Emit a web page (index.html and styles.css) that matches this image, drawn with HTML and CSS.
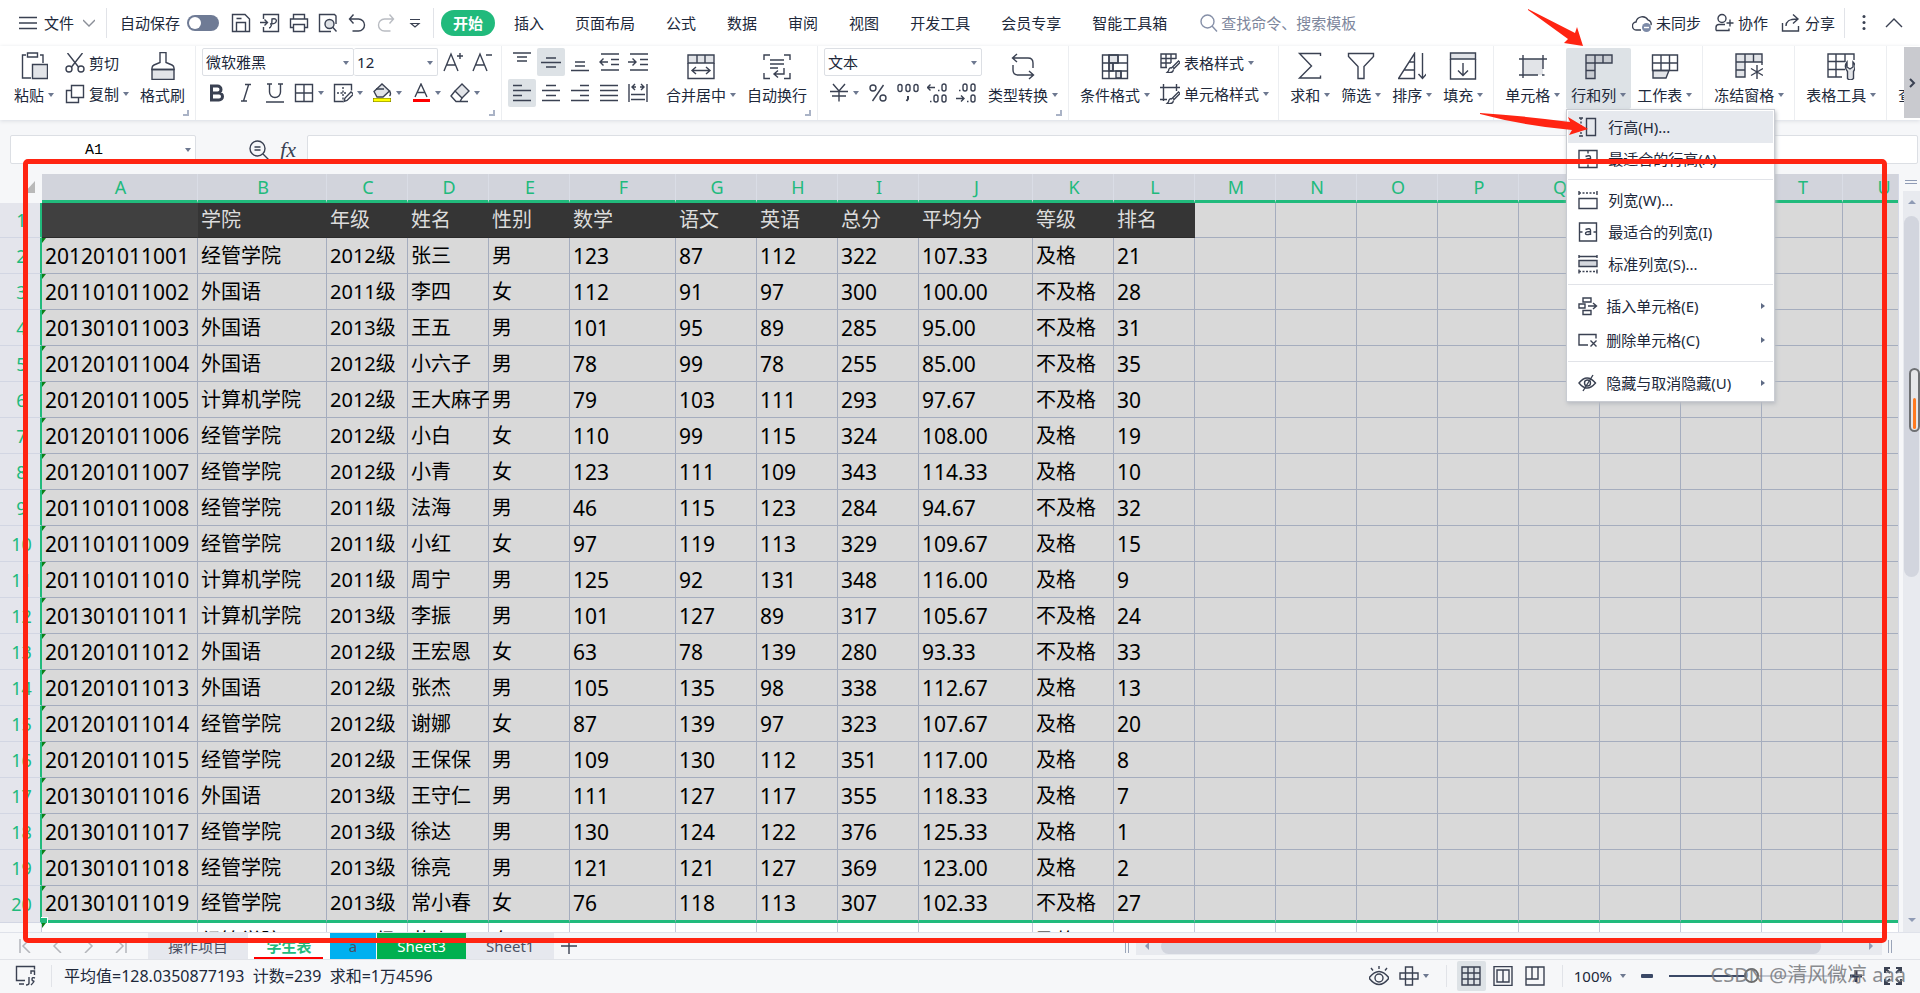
FILE: index.html
```html
<!DOCTYPE html>
<html lang="zh-CN">
<head>
<meta charset="utf-8">
<title>学生表</title>
<link rel="stylesheet" href="styles.css">
</head>
<body>
<div class="app">

<header class="topbar">
  <button class="file"><svg class="i w18" viewBox="0 0 18 18"><path d="M0 3.500h18M0 9h18M0 14.500h18"/></svg><span>文件</span><svg class="i chev" viewBox="0 0 12 12"><path d="M0 3l6 6 6-6"/></svg></button>
  <span class="vsep"></span>
  <label class="autosave"><span>自动保存</span><input type="checkbox" class="toggle"></label>
  <div class="quick">
    <button aria-label="保存"><svg class="i" viewBox="0 0 20 20"><path d="M1.500 1.500h12.500l4.500 4.500v12.500h-17zM5.500 18.500v-9h9v9M5.500 5.500h5"/></svg></button>
    <button aria-label="输出为PDF"><svg class="i" viewBox="0 0 20 20"><path d="M3.500 6v-4.500h15v17h-15v-4.500M0 9.500h7M4.500 6.500l3 3-3 3M9 15c2 0 3-2 3-9 4-1 5 1 4 3s-4 2-6 2"/></svg></button>
    <button aria-label="打印"><svg class="i" viewBox="0 0 20 20"><path d="M4.500 6v-4.500h11v4.500M4.500 14.500h-3v-8.500h17v8.500h-3M4.500 11.500h11v7h-11z"/></svg></button>
    <button aria-label="打印预览"><svg class="i" viewBox="0 0 20 20"><path d="M13 18.500h-11.500v-17h15l1.500 1.500v8"/><circle cx="11.500" cy="11" r="4.500" fill="#dfe2e6"/><path d="M14.500 14l4 4.500"/></svg></button>
    <button aria-label="撤销"><svg class="i" viewBox="0 0 20 20"><path d="M6.500 1.500l-4 4.500 4 4.500M2.500 6h9a6 6 0 0 1 0 12h-6"/></svg></button>
    <button aria-label="恢复"><svg class="i pale" viewBox="0 0 20 20"><path d="M13.500 1.500l4 4.500-4 4.500M17.500 6h-9a6 6 0 0 0 0 12h6"/></svg></button>
    <button aria-label="更多"><svg class="i thin" viewBox="0 0 20 20"><path d="M5 6.500h10M6 10.500l4 3.500 4-3.500z"/></svg></button>
  </div>
  <span class="vsep s2"></span>
  <nav class="tabs">
    <button class="active">开始</button><button>插入</button><button>页面布局</button><button>公式</button><button>数据</button><button>审阅</button><button>视图</button><button>开发工具</button><button>会员专享</button><button>智能工具箱</button>
  </nav>
  <label class="search"><svg class="i w18 mute" viewBox="0 0 18 18"><circle cx="7.500" cy="7.500" r="6.500"/><path d="M12 12l5 5.500"/></svg><input type="search" aria-label="搜索" placeholder="查找命令、搜索模板"></label>
  <div class="account">
    <button><svg class="i" viewBox="0 0 20 20"><path d="M9 17H5a4 4 0 0 1-1-8 6.500 6.500 0 0 1 12-2 4 4 0 0 1 3 5"/><circle cx="14.500" cy="14.500" r="4.500" fill="#7d8ba8" stroke="none"/><path d="M12 14.500h5" stroke="#fff"/></svg>未同步</button>
    <button><svg class="i" viewBox="0 0 20 20"><circle cx="8" cy="5.500" r="4"/><path d="M2 17.500v-3c0-2 1-3 3-3h6M2 17.500h13v-2M12.500 10h7M16 6.500v7"/></svg>协作</button>
    <button><svg class="i" viewBox="0 0 20 20"><path d="M1.500 10v8h16v-5M5 13c0-5 3-7 11-7M12 1.500l5 4.500-5 4.500"/></svg>分享</button>
  </div>
  <span class="vsep s3"></span>
  <button class="dots" aria-label="更多选项"><svg viewBox="0 0 4 18"><g fill="#3a4152"><circle cx="2" cy="2.500" r="1.500"/><circle cx="2" cy="8.500" r="1.500"/><circle cx="2" cy="14.500" r="1.500"/></g></svg></button>
  <button class="fold" aria-label="折叠功能区"><svg class="i w18" viewBox="0 0 18 18"><path d="M1 13l8-8 8 8"/></svg></button>
</header>

<section class="ribbon">
  <div class="group first">
    <button class="big"><svg class="i b" viewBox="0 0 28 28"><path d="M6 3H2.500v23H11M20 3h3v8M7.500 1h10v4h-10z"/><path d="M12.500 12.500h15v14h-15z" fill="#e2e4e8"/></svg><span class="lab">粘贴<i class="caret"></i></span></button>
    <div class="col">
      <button class="small"><svg class="i" viewBox="0 0 20 20"><path d="M2.500 0l11 14M17.500 0l-11 14"/><circle cx="4" cy="16" r="3"/><circle cx="16" cy="16" r="3"/></svg>剪切</button>
      <button class="small"><svg class="i" viewBox="0 0 20 20"><path d="M6.500 1.500h12v12h-12zM6.500 6.500h-5v12h12v-5"/></svg>复制<i class="caret"></i></button>
    </div>
    <button class="big"><svg class="i b" viewBox="0 0 28 28"><path d="M3 17.500h22v10h-22z" fill="#e2e4e8"/><path d="M11 10.500v-10h6v10l6 2.500q2 1 2 3v1.500h-22v-1.500q0-2 2-3z"/></svg><span class="lab">格式刷</span></button>
    <i class="launch"></i>
  </div>

  <div class="group">
    <div class="col font">
      <div class="line">
        <span class="sel name"><select aria-label="字体"><option>微软雅黑</option></select></span><span class="sel size"><select aria-label="字号"><option>12</option></select></span>
        <button class="ic" aria-label="增大字号"><svg class="i" viewBox="0 0 20 20"><path d="M1 19l7-17 7 17M3.500 13h9M14 4h6M17 1v6"/></svg></button>
        <button class="ic" aria-label="减小字号"><svg class="i" viewBox="0 0 20 20"><path d="M1 19l7-17 7 17M3.500 13h9M14 3h6"/></svg></button>
      </div>
      <div class="line">
        <button class="ic" aria-label="加粗"><svg class="i" viewBox="0 0 20 20"><path stroke-width="3" d="M4.500 3h6a3.500 3.500 0 0 1 0 7h-6zM4.500 10h7.500a3.500 3.500 0 0 1 0 7h-7.500z"/></svg></button>
        <button class="ic" aria-label="倾斜"><svg class="i" viewBox="0 0 20 20"><path d="M9 1.500h6M5 18h6M12.500 2l-5 16"/></svg></button>
        <button class="ic" aria-label="下划线"><svg class="i" viewBox="0 0 20 20"><path d="M2 1h5M13 1h5M4.500 1v8a5.500 5.500 0 0 0 11 0v-8M1 19h18"/></svg></button>
        <button class="ic dd" aria-label="边框"><svg class="i" viewBox="0 0 20 20"><path d="M1.500 1.500h17v17h-17zM10 1.500v17M1.500 10h17"/></svg><i class="caret"></i></button>
        <button class="ic dd" aria-label="绘图边框"><svg class="i" viewBox="0 0 20 20"><path d="M10 18.500h-8.500v-17h17v6"/><path stroke-dasharray="2 1.500" d="M10 4v13M4 10h10"/><path d="M11 18.500l1-3.500 6-6 2.500 2-6.500 6.500z"/></svg><i class="caret"></i></button>
        <button class="ic dd" aria-label="填充颜色"><svg class="i" viewBox="0 0 20 20"><path fill="#e2e4e8" d="M2 8.500l8-7.500 7.500 7-6.500 6h-6z"/><path d="M4 6h8M17.500 8q2 3 0 5"/><path d="M1 17h18" stroke="#6b6b00" stroke-width="4"/><path d="M1.500 17h17" stroke="#ff0" stroke-width="3"/></svg><i class="caret"></i></button>
        <button class="ic dd" aria-label="字体颜色"><svg class="i" viewBox="0 0 20 20"><path d="M4 14l6-13 6 13M6 9.500h8"/><path d="M2 17.500h17" stroke="red" stroke-width="3"/></svg><i class="caret"></i></button>
        <button class="ic dd" aria-label="清除"><svg class="i" viewBox="0 0 20 20"><path fill="#e2e4e8" d="M5 8l7-7 7 7-7 7z"/><path d="M5 8l-4 5 5 5.500h4l2-3.500M8 18.500h10"/></svg><i class="caret"></i></button>
      </div>
    </div>
    <i class="launch"></i>
  </div>

  <div class="group align">
    <div class="col">
      <div class="line gap">
        <button class="ic" aria-label="顶端对齐"><svg class="i" viewBox="0 0 20 20"><path d="M1 1h18M5 5h10M5 9h10"/></svg></button>
        <button class="ic on" aria-label="垂直居中"><svg class="i" viewBox="0 0 20 20"><path d="M5 6h10M0 10.500h20M5 15h10"/></svg></button>
        <button class="ic" aria-label="底端对齐"><svg class="i" viewBox="0 0 20 20"><path d="M5 10h10M5 14h10M1 18.500h18"/></svg></button>
        <button class="ic" aria-label="减少缩进"><svg class="i" viewBox="0 0 20 20"><path d="M2 2h18M12 7.500h8M12 12.500h8M2 18h18M1 10h8M4.500 6.500l-3.500 3.500 3.500 3.500"/></svg></button>
        <button class="ic" aria-label="增加缩进"><svg class="i" viewBox="0 0 20 20"><path d="M2 2h18M12 7.500h8M12 12.500h8M2 18h18M0 10h8M4.500 6.500l3.500 3.500-3.500 3.500"/></svg></button>
      </div>
      <div class="line gap">
        <button class="ic on" aria-label="左对齐"><svg class="i" viewBox="0 0 20 20"><path d="M1 2.500h9M1 7.500h18M1 12.500h9M1 17.500h18"/></svg></button>
        <button class="ic" aria-label="水平居中"><svg class="i" viewBox="0 0 20 20"><path d="M5 2.500h10M1 7.500h18M5 12.500h10M1 17.500h18"/></svg></button>
        <button class="ic" aria-label="右对齐"><svg class="i" viewBox="0 0 20 20"><path d="M10 2.500h9M1 7.500h18M10 12.500h9M1 17.500h18"/></svg></button>
        <button class="ic" aria-label="两端对齐"><svg class="i" viewBox="0 0 20 20"><path d="M1 2.500h18M1 7.500h18M1 12.500h18M1 17.500h18"/></svg></button>
        <button class="ic" aria-label="分散对齐"><svg class="i" viewBox="0 0 20 20"><path d="M1 1v18M19 1v18M3 11.500h14M3 16.500h14M4 4h4M12 4h4M7 1l-3 3 3 3M13 1l3 3-3 3"/></svg></button>
      </div>
    </div>
    <button class="big merge"><svg class="i b" viewBox="0 0 28 28"><path fill="#e2e4e8" d="M1 3h26v8h-26z"/><path d="M1 11v15.500h26v-15.500M10 3v8M18 3v8M5 18.500h18M9 15l-4 3.500 4 3.500M19 15l4 3.500-4 3.500"/></svg><span class="lab">合并居中<i class="caret"></i></span></button>
    <button class="big"><svg class="i b" viewBox="0 0 28 28"><path d="M1 8v-5h6M21 3h6v5M1 21v5.500h6M21 26.500h6v-5.500M7 8h14M7 12h14M7 16h8M21 16v6h-9M15 18.500l-4 3.500 4 3.500"/></svg><span class="lab">自动换行</span></button>
    <i class="launch"></i>
  </div>

  <div class="group">
    <div class="col">
      <div class="line"><span class="sel num"><select aria-label="数字格式"><option>文本</option></select></span></div>
      <div class="line nums">
        <button class="ic dd" aria-label="货币"><svg class="i" viewBox="0 0 20 20"><path d="M4 1l6 7 6-7M1 8.500h18M3 13h14M10 8.500v10"/></svg><i class="caret"></i></button>
        <button class="ic" aria-label="百分比"><svg class="i" viewBox="0 0 20 20"><circle cx="5" cy="5" r="3"/><circle cx="15" cy="15" r="3"/><path d="M15.500 2l-11 16"/></svg></button>
        <button class="ic" aria-label="千位分隔"><svg class="i w22" viewBox="0 0 22 20"><rect x="1" y="1.500" width="4" height="7" rx="2"/><rect x="9" y="1.500" width="4" height="7" rx="2"/><rect x="17" y="1.500" width="4" height="7" rx="2"/><path stroke-width="2" d="M11 13v3l-1.500 2"/></svg></button>
        <button class="ic" aria-label="增加小数位"><svg class="i" viewBox="0 0 20 20"><path d="M0 4.500h8M3.500 1.500l-3 3 3 3M11 7.500h1.500M3 18.500h1.500"/><rect x="15" y="1" width="4" height="7" rx="2"/><rect x="7" y="12" width="4" height="7" rx="2"/><rect x="15" y="12" width="4" height="7" rx="2"/></svg></button>
        <button class="ic" aria-label="减少小数位"><svg class="i" viewBox="0 0 20 20"><path d="M0 15.500h8M5 12.500l3 3-3 3M11 18.500h1.500M3 7.500h1.500"/><rect x="7" y="1" width="4" height="7" rx="2"/><rect x="15" y="1" width="4" height="7" rx="2"/><rect x="15" y="12" width="4" height="7" rx="2"/></svg></button>
      </div>
    </div>
    <button class="big"><svg class="i b" viewBox="0 0 28 28"><path d="M8 2L3.500 6 8 10M4 6h15q5 0 5 5v5M4 13v5q0 5 5 5h15M20 19l4.500 4-4.500 4"/></svg><span class="lab">类型转换<i class="caret"></i></span></button>
    <i class="launch"></i>
  </div>

  <div class="group">
    <button class="big"><svg class="i b" viewBox="0 0 28 28"><path fill="#e2e4e8" d="M8 3h9v8h-9zM15 19h5v7h-5zM8 11h4v8h-4z"/><path d="M1.500 3h25v23.500h-25zM1.500 11h25M1.500 19h25M8 3v23M17 3v8M12 11v8M20 19v7"/></svg><span class="lab">条件格式<i class="caret"></i></span></button>
    <div class="col">
      <button class="small"><svg class="i" viewBox="0 0 20 20"><path d="M7 14.500h-6v-13.500h15v5M1 5.500h15M1 10h10M6 1v13.500M11 1v9M18.500 8l-6 6 1.500 1.500 6-6zM12 15q-3-1-3.500 3l-1.500 1.500q6 1 6.500-3"/></svg>表格样式<i class="caret"></i></button>
      <button class="small"><svg class="i" viewBox="0 0 20 20"><path d="M0 3.500h20M3.500 0v17M0 15.500h7M16.500 0v7M18.500 8l-6 6 1.500 1.500 6-6zM12 15q-3-1-3.500 3l-1.500 1.500q6 1 6.500-3"/></svg>单元格样式<i class="caret"></i></button>
    </div>
  </div>

  <div class="group">
    <button class="big"><svg class="i b" viewBox="0 0 28 28"><path d="M24.500 4v-2.500h-21l12 12.500-12 12h21v-2.500"/></svg><span class="lab">求和<i class="caret"></i></span></button>
    <button class="big"><svg class="i b" viewBox="0 0 28 28"><path d="M1.500 1.500h25v3l-9.500 10v12h-6v-12l-9.500-10z"/></svg><span class="lab">筛选<i class="caret"></i></span></button>
    <button class="big"><svg class="i b" viewBox="0 0 28 28"><path d="M16.500 1.500v25h-16zM16.500 10h-5M16.500 18h-10M24.500 1v25M20.500 22l4 4.500 4-4.500"/></svg><span class="lab">排序<i class="caret"></i></span></button>
    <button class="big"><svg class="i b" viewBox="0 0 28 28"><path fill="#e2e4e8" d="M1.500 1h25v6h-25z"/><path d="M1.500 7v20h25v-20M14 11v12M9 18.500l5 5 5-5"/></svg><span class="lab">填充<i class="caret"></i></span></button>
  </div>

  <div class="group">
    <button class="big"><svg class="i b" viewBox="0 0 28 28"><path fill="#e2e4e8" stroke="none" d="M4 7h20v16h-20z"/><path d="M0 7h28M4 3v23M24 3v14M0 23h19M23 23h2.500"/></svg><span class="lab">单元格<i class="caret"></i></span></button>
    <div class="drop">
      <button class="big on"><svg class="i b" viewBox="0 0 28 28"><path fill="#c8ccd2" d="M1 3h26v8h-17v15.500h-9z"/><path d="M1 11h9v-8M18 3v8M1 18.500h9"/></svg><span class="lab">行和列<i class="caret"></i></span></button>
      <div class="menu">
        <button class="hot"><svg class="i" viewBox="0 0 20 20"><path d="M8.500 1.500h9v17h-9zM1 1h4M1 19h4"/><path stroke-dasharray="2 1.500" d="M3 1v18"/></svg>行高(H)...</button>
        <button><svg class="i" viewBox="0 0 20 20"><path d="M1 1.500h18v17h-18zM10 1.500v3M10 15.500v3M7.500 7.500q5-2 5 1v4.500M12.500 9.500q-5 0-5 2t5 .5"/></svg>最适合的行高(A)</button>
        <hr>
        <button><svg class="i" viewBox="0 0 20 20"><path d="M1 8.500h18v10h-18zM1 1v4M19 1v4"/><path stroke-dasharray="2 1.500" d="M1 3h18"/></svg>列宽(W)...</button>
        <button><svg class="i" viewBox="0 0 20 20"><path d="M1.500 1h17v18h-17zM1.500 10h3M15.500 10h3M7.500 7.500q5-2 5 1v4.500M12.500 9.500q-5 0-5 2t5 .5"/></svg>最适合的列宽(I)</button>
        <button><svg class="i" viewBox="0 0 20 20"><path d="M1 1v3M19 1v3M1 2.500h18M1 15.500v4M19 15.500v4"/><path fill="#d5d8de" d="M1 6.500h18v6h-18z"/><path stroke-dasharray="2 1.500" d="M1 17.500h18"/></svg>标准列宽(S)...</button>
        <hr>
        <button class="tall"><svg class="i" viewBox="0 0 20 20"><path d="M5 2h8v4h-8zM1 8h6v4h-6zM5 14.500h8v4h-8zM10 10h8M15 7l3.500 3-3.500 3"/></svg>插入单元格(E)<i class="more"></i></button>
        <button class="tall"><svg class="i" viewBox="0 0 20 20"><path d="M10 15h-9v-10.500h17v4M12.500 10.500l6 6M18.500 10.500l-6 6"/></svg>删除单元格(C)<i class="more"></i></button>
        <hr>
        <button class="tall"><svg class="i" viewBox="0 0 20 20"><path d="M1 10q8-10 16.500 0-8.500 10-16.500 0zM15 2l-10 16"/><circle cx="9.500" cy="10" r="3"/></svg>隐藏与取消隐藏(U)<i class="more"></i></button>
      </div>
    </div>
    <button class="big"><svg class="i b" viewBox="0 0 28 28"><path fill="#e2e4e8" d="M2 18.500v7.500h13l3-7.500z"/><path d="M1.500 3h25v15.500h-25zM1.500 11h25M10 3v15.500M18.500 3v15.500"/></svg><span class="lab">工作表<i class="caret"></i></span></button>
  </div>

  <div class="group">
    <button class="big"><svg class="i b" viewBox="0 0 28 28"><path fill="#e2e4e8" d="M1 2h26v8h-17v15h-9z"/><path d="M1 10h9v-8M18.500 2v8M1 18h9M27 10v3M22 13v14M16 16.500l12 7M28 16.500l-12 7"/></svg><span class="lab">冻结窗格<i class="caret"></i></span></button>
  </div>
  <div class="group">
    <button class="big"><svg class="i b" viewBox="0 0 28 28"><path d="M15 25h-14v-23h26v6M1 9.500h17M1 17.500h17M9 2v23M18 2v8"/><path fill="#e2e4e8" d="M20 10v5l3 2 3-2v-5q4 4 .5 9.500v7q-3.500 3-6 0v-7q-4-5-.5-9.500z"/></svg><span class="lab">表格工具<i class="caret"></i></span></button>
  </div>
  <div class="group cut"><button class="big"><span class="lab">查找</span></button></div>
  <button class="slide" aria-label="向右滚动"><svg class="i chev" viewBox="0 0 12 12"><path stroke-width="2" d="M4 2l4 4-4 4"/></svg></button>
</section>

<section class="formula">
  <label class="cellname"><input aria-label="名称框" value="A1"><i class="caret"></i></label>
  <button class="fic" aria-label="浏览公式结果"><svg class="i" viewBox="0 0 20 20"><circle cx="8.500" cy="8.500" r="7.500"/><path d="M14 14l6 6M5.500 7h6M5.500 10h6"/></svg></button>
  <button class="fx">fx</button>
  <input class="fbar" aria-label="编辑栏">
</section>

<main class="work">
  <div class="sheet"><table id="grid" class="grid"></table></div>
  <aside class="rail">
    <span class="split"></span>
    <div class="track"><i class="up"></i><span class="thumb"></span><i class="down"></i></div>
  </aside>
</main>

<nav class="sheets">
  <div class="jump">
    <button aria-label="第一张"><svg viewBox="0 0 12 14"><path d="M1 0v14M11 0L4 7l7 7"/></svg></button>
    <button aria-label="上一张"><svg viewBox="0 0 12 14"><path d="M10 0L3 7l7 7"/></svg></button>
    <button aria-label="下一张"><svg viewBox="0 0 12 14"><path d="M2 0l7 7-7 7"/></svg></button>
    <button aria-label="最后一张"><svg viewBox="0 0 12 14"><path d="M11 0v14M1 0l7 7-7 7"/></svg></button>
  </div>
  <button class="st">操作项目</button><button class="st cur">学生表</button><button class="st blue">a</button><button class="st green">Sheet3</button><button class="st">Sheet1</button>
  <button class="add" aria-label="新建工作表"><svg class="i w18" viewBox="0 0 18 18"><path d="M1 9h16M9 1v16"/></svg></button>
  <div class="hscroll"><span class="grip"></span><div class="htrack"><i class="lt"></i><span class="hthumb"></span><i class="rt"></i></div><span class="grip"></span></div>
</nav>

<footer class="status">
  <svg class="i js" viewBox="0 0 22 24"><path d="M10 16.500h-8.500v-14h18v3M4 20h5M16 10v-3h3.500v4M14 13v6q0 2-3 2M20 14q-3-1-3 1t1.500 2-2.500 4"/></svg>
  <span class="vsep"></span>
  <output class="stats">平均值=128.0350877193&nbsp; 计数=239&nbsp; 求和=1万4596</output>
  <div class="views">
    <button class="v" aria-label="护眼模式"><svg class="i" viewBox="0 0 20 20"><path d="M0 12q10-13 20 0-10 13-20 0zM10 0v3M2 2l2 2.500M18 2l-2 2.500"/><circle cx="10" cy="12" r="4"/></svg></button>
    <button class="v cross" aria-label="阅读模式"><svg class="i" viewBox="0 0 20 20"><path d="M6.500 1h7v18h-7zM1 7h18v6h-18z"/></svg><i class="caret"></i></button>
    <span class="vsep"></span>
    <button class="v on" aria-label="普通视图"><svg class="i" viewBox="0 0 20 20"><path d="M1 1h18v18h-18zM1 7h18M1 13h18M7 1v18M13 1v18"/></svg></button>
    <button class="v" aria-label="页面布局"><svg class="i" viewBox="0 0 20 20"><path d="M1 .5h18v19h-18zM4 4h12v12h-12zM10 4v12"/></svg></button>
    <button class="v last" aria-label="分页预览"><svg class="i" viewBox="0 0 20 20"><path d="M1 1h18v18h-18zM1 13h12v-12M7 1v12"/></svg></button>
    <span class="vsep"></span>
    <button class="zoom">100%<i class="caret"></i></button>
    <button class="minus" aria-label="缩小"></button>
    <input type="range" class="slider" aria-label="缩放" min="0" max="200" value="93">
    <button class="plus" aria-label="放大"><svg class="i" viewBox="0 0 12 12"><path stroke-width="3" d="M0 6h12M6 0v12"/></svg></button>
    <button class="full" aria-label="全屏"><svg class="i" viewBox="0 0 20 20"><path stroke-width="2" d="M2 7v-5h5M13 2h5v5M2 13v5h5M13 18h5v-5M3 3l4 4M17 3l-4 4M3 17l4-4M17 17l-4-4"/></svg></button>
  </div>
</footer>

<span class="floater"><i></i></span>
<div class="frame"></div>
<svg class="arrows" width="150" height="130" viewBox="0 0 150 130"><g fill="#ff2412"><path d="M48 0L95 24l2-6 6 19-19-3 4-4L48 1z"/><path d="M0 104q45 3 90 9l-2-5 20 12-19 6 3-5Q45 117 0 105z"/></g></svg>
<span class="mark">CSDN @清风微凉 aaa</span>
</div>
<script src="grid.js"></script>
</body>
</html>
```
FILE: styles.css
```css
* { box-sizing: border-box; }
body { margin: 0; background: #f6f7f9; color: #20283a; font: 15px/20px "Noto Sans", "Noto Sans CJK SC", sans-serif; overflow: hidden; }
button, input, select { font: inherit; color: inherit; background: none; border: 0; padding: 0; margin: 0; outline: 0; }
button { display: flex; align-items: center; justify-content: center; white-space: nowrap; flex: none; }
.app { position: relative; height: 100vh; display: flex; flex-direction: column; overflow: hidden; }
.i { width: 20px; height: 20px; fill: none; stroke: #3a4152; stroke-width: 1.4; flex: none; display: block; }
.i.w18 { width: 18px; height: 18px; }
.i.w22 { width: 22px; }
.i.b { width: 28px; height: 28px; }
.i.chev { width: 12px; height: 12px; }
.i.pale { stroke: #b9bcc2; }
.i.mute { stroke: #8690a8; }
.i.thin { stroke-width: 1.2; }
.vsep { width: 1px; height: 30px; background: #e1e3e8; flex: none; }
.caret { width: 0; height: 0; border: 3px solid transparent; border-top: 4px solid #6d7890; border-bottom: 0; flex: none; }

.topbar { height: 46px; flex: none; background: #fff; display: flex; align-items: center; padding: 0 17px 0 19px; }
.file { gap: 7px; }
.file .chev { margin-left: 2px; stroke: #8b8f98; }
.topbar > .vsep { margin-left: 11px; }
.autosave { display: flex; align-items: center; gap: 7px; margin-left: 13px; flex: none; }
.toggle { appearance: none; width: 32px; height: 16px; border-radius: 8px; background: #6f7b95; display: flex; align-items: center; padding: 0 2px; }
.toggle::before { content: ""; width: 12px; height: 12px; border-radius: 50%; background: #fff; }
.quick { display: flex; margin-left: 7px; }
.quick button { width: 29px; }
.topbar > .s2 { margin-left: 4px; }
.tabs { display: flex; gap: 31px; margin-left: 7px; }
.tabs .active { width: 54px; height: 26px; border-radius: 13px; background: #21ba7c; color: #fff; font-weight: 700; margin-right: -12px; }
.search { display: flex; align-items: center; gap: 3px; margin-left: 33px; flex: 1; min-width: 0; }
.search input { flex: 1; min-width: 0; appearance: none; }
.search input::placeholder { color: #7d869c; opacity: 1; }
.account { display: flex; gap: 13px; }
.account button { gap: 4px; }
.topbar > .s3 { margin-left: 9px; }
.dots { margin-left: 17px; }
.dots svg { width: 4px; height: 18px; }
.fold { margin-left: 19px; }

.ribbon { height: 74px; flex: none; background: #fff; display: flex; position: relative; z-index: 2; box-shadow: 0 1px 4px #d9dce2; }
.group { position: relative; display: flex; gap: 1px; align-items: flex-start; padding: 2px 5px 0 6px; border-left: 1px solid #eceef1; flex: none; }
.group.first { border-left: 0; padding-left: 9px; gap: 2px; }
.group.cut { flex: 1; min-width: 0; overflow: hidden; }
.cut .big { padding-top: 33px; }
.launch { position: absolute; right: 6px; bottom: 4px; width: 6px; height: 6px; border: solid #aab3c6; border-width: 0 2px 2px 0; }
.big { height: 61px; padding: 0 5px; flex-direction: column; gap: 5px; border-radius: 2px; }
.lab { display: flex; align-items: center; gap: 4px; }
.on { background: #dde2e6; }
.col { display: flex; flex-direction: column; gap: 2px; }
.small { height: 29px; padding: 0 4px; gap: 4px; justify-content: flex-start; }
.line { display: flex; height: 28px; align-items: center; }
.line + .line { margin-top: 1px; }
.line.gap { gap: 1px; }
.ic { width: 28px; height: 28px; border-radius: 2px; }
.font .ic { width: 29px; }
.ic.dd, .font .ic.dd { width: 39px; gap: 4px; }
.merge { margin-left: 8px; }
.nums { justify-content: space-between; padding-right: 2px; }
.sel { position: relative; display: block; height: 28px; border: 1px solid #dcdfe4; border-radius: 2px; }
.sel select { appearance: none; width: 100%; height: 26px; padding: 0 3px; display: block; }
.sel::after { content: ""; position: absolute; right: 4px; top: 12px; border: 3px solid transparent; border-top: 4px solid #6d7890; border-bottom: 0; }
.sel.name { width: 152px; }
.sel.size { width: 84px; border-left: 0; }
.sel.num { width: 158px; }
.slide { width: 16px; height: 71px; margin-top: 1px; background: #c9cacf; }

.drop { position: relative; }
.menu { position: absolute; z-index: 3; left: 0; top: 61px; width: 209px; padding: 1px; background: #fff; border: 1px solid #c9ccd2; box-shadow: 1px 2px 4px #b9bcc2; }
.menu button { width: 100%; height: 32px; padding: 0 8px 0 10px; gap: 10px; justify-content: flex-start; }
.menu .tall { height: 34px; gap: 8px; }
.menu .hot { background: #e6e9ee; }
.menu hr { margin: 4px 0; border: 0; height: 1px; background: #e1e3e8; }
.more { margin-left: auto; border: 3px solid transparent; border-left: 4px solid #5f6b85; border-right: 0; }

.formula { height: 54px; flex: none; display: flex; align-items: center; padding: 15px 2px 10px 10px; }
.cellname { display: flex; align-items: center; width: 186px; height: 29px; border: 1px solid #dcdfe4; border-radius: 2px; background: #fff; padding-right: 4px; }
.cellname input { flex: 1; min-width: 0; text-align: center; padding: 2px 8px 0 0; font: 15px/20px "Liberation Mono", monospace; color: #000; }
.fic { margin-left: 53px; }
.fx { width: 38px; font: italic 22px/24px "Liberation Serif", serif; color: #3a4152; }
.fbar { flex: 1; height: 29px; border: 1px solid #dcdfe4; border-radius: 2px; background: #fff; }

.work { flex: 1; min-height: 0; display: flex; gap: 4px; }
.sheet { flex: 1; min-width: 0; overflow: hidden; background: #fff; border-right: 1px solid #d5d9e6; }
.grid { table-layout: fixed; width: 0; border-collapse: separate; border-spacing: 0; color: #000; }
.c-row { width: 42px; } .c-id { width: 156px; } .c-dept { width: 129px; } .c-std { width: 81px; } .c-f { width: 106px; } .c-avg { width: 114px; }
.grid th, .grid td { padding: 0; font-weight: 400; white-space: nowrap; }
.grid thead th { height: 29px; background: #d2d4dc; color: #21ba7c; font-size: 18px; line-height: 24px; border-right: 1px solid #dadde6; border-bottom: 3px solid #21ba7c; padding-left: 2px; }
.grid thead .corner { background: #f6f7f9; border-right: 0; border-bottom-color: #f6f7f9; padding: 0; }
.corner::before { content: ""; display: block; margin-left: 24px; width: 0; border-left: 11px solid transparent; border-bottom: 12px solid #b9b9b9; }
.grid tbody th { background: #e4e5ec; color: #21ba7c; font-size: 18px; line-height: 24px; border-right: 2px solid #21ba7c; border-bottom: 1px solid #d2d6e3; padding-left: 3px; }
.grid td { position: relative; height: 36px; padding-left: 3px; background: #d9d9d9; border-right: 1px solid #a5adbe; border-bottom: 1px solid #a5adbe; font-size: 21px; line-height: 24px; }
.grid td.t { font-size: 20px; }
.grid .head td { height: 35px; }
.grid .head td.dark { background: #353535; color: #dcdcdc; border-color: #2b2b2b; border-right-color: #353535; }
.grid .head td.dark:nth-child(2) { background: #404040; border-right-color: #404040; }
.grid td.id::before { content: ""; position: absolute; left: 0; top: 0; border-top: 5px solid #0d7f17; border-right: 4px solid transparent; }
.grid .last td { height: 37px; border-bottom: 3px solid #21ba7c; }
.grid .last td.id::after { content: ""; position: absolute; left: -1px; bottom: -4px; width: 6px; height: 6px; background: #21ba7c; border: solid #fff; border-width: 1px 1px 0 0; }
.grid .after td { background: #fff; border-color: #c5cadb; }
.grid .after th { background: #f6f7f9; border-right: 1px solid #c5cadb; }
.rail { width: 17px; display: flex; flex-direction: column; }
.split { height: 4px; margin: 6px 3px 7px 2px; border: solid #8f9bb5; border-width: 1px 0; }
.track { flex: 1; min-height: 0; background: #e8eaef; display: flex; flex-direction: column; align-items: center; padding: 9px 0 10px; }
.up { border: 4px solid transparent; border-bottom-color: #8f9bb5; border-top: 0; }
.down { margin-top: auto; border: 4px solid transparent; border-top-color: #8f9bb5; border-bottom: 0; }
.thumb { width: 15px; flex: 0 0 50%; margin-top: 12px; border-radius: 8px; background: #d2d5de; }

.sheets { height: 27px; flex: none; display: flex; border-top: 1px solid #dfe2ea; padding-left: 19px; }
.jump { width: 129px; flex: none; display: flex; gap: 20px; }
.jump svg { width: 12px; height: 14px; fill: none; stroke: #b3b5ba; stroke-width: 1.5; display: block; }
.st { padding: 0 20px; background: #e6e8ee; color: #4a5064; }
.st.cur { width: 82px; background: #fff; color: #21ba7c; font-weight: 700; padding: 0; position: relative; }
.st.cur::after { content: ""; position: absolute; left: 6px; right: 7px; bottom: 0; height: 2px; background: red; }
.st.blue { width: 46px; background: #00b0f0; }
.st.green { width: 89px; margin-left: 1px; background: #00b050; color: #fff; }
.add { padding: 0 6px; }
.hscroll { width: 795px; margin-left: auto; display: flex; align-items: center; }
.grip { width: 4px; height: 13px; border: solid #9aa4b8; border-width: 0 1px; }
.htrack { flex: 1; margin: 0 6px 0 7px; height: 17px; background: #e8eaef; display: flex; align-items: center; padding: 0 9px; }
.hthumb { height: 15px; flex: 0 1 660px; margin: 0 auto 0 12px; border-radius: 8px; background: #d2d5de; }
.lt { border: 4px solid transparent; border-right-color: #8f9bb5; border-left: 0; }
.rt { border: 4px solid transparent; border-left-color: #8f9bb5; border-right: 0; }
.hscroll > .grip:last-child { margin-right: 28px; }

.status { height: 34px; flex: none; display: flex; align-items: center; border-top: 1px solid #e1e3e8; padding: 0 17px 2px 15px; }
.js { width: 22px; height: 24px; }
.status > .vsep { height: 22px; margin: 0 12px 0 14px; }
.stats { white-space: pre; font-size: 16px; }
.views { display: flex; align-items: center; margin-left: auto; }
.views .vsep { height: 22px; }
.v { width: 29px; height: 30px; margin-right: 3px; border-radius: 2px; }
.v.cross { width: 34px; gap: 4px; margin-right: 15px; }
.v.on { margin-left: 10px; }
.v.last { margin-right: 12px; }
.zoom { gap: 8px; margin-left: 11px; }
.minus { width: 12px; height: 4px; border-radius: 1px; background: #3a4866; margin: 0 16px 0 15px; }
.slider { appearance: none; width: 176px; height: 16px; background: linear-gradient(90deg, #3a4866 46%, #c3c8d2 46%) center / 100% 2px no-repeat; }
.slider::-webkit-slider-thumb { appearance: none; width: 15px; height: 15px; border-radius: 50%; border: 2px solid #6b6b6b; background: #f6f7f9; }
.plus { margin: 0 21px 0 5px; }
.plus .i { width: 12px; height: 12px; stroke: #2f3a55; }

.floater { position: absolute; z-index: 4; right: 0; top: 368px; width: 11px; height: 64px; border: 2px solid #6e7073; border-radius: 6px; background: #e6e7ea; padding: 28px 2px 1px; display: flex; }
.floater i { flex: 1; background: #ff7a20; border-radius: 2px; }
.frame { position: absolute; z-index: 5; left: 23px; right: 33px; top: 159px; bottom: 50px; border: 5px solid #ff2412; border-radius: 5px; pointer-events: none; }
.arrows { position: absolute; z-index: 6; right: 290px; top: 9px; pointer-events: none; }
.mark { position: absolute; z-index: 6; right: 14px; bottom: 6px; font-size: 20px; line-height: 24px; color: #77797d; opacity: .85; pointer-events: none; }
```
FILE: grid.js
```javascript
const cols = ['row', 'id', 'dept', 'std', 'std', 'std', 'f', 'std', 'std', 'std', 'avg'].concat(Array(11).fill('std'));
const letters = 'ABCDEFGHIJKLMNOPQRSTU'.split('');
const data = `
_ 学院 年级 姓名 性别 数学 语文 英语 总分 平均分 等级 排名
201201011001 经管学院 2012级 张三 男 123 87 112 322 107.33 及格 21
201101011002 外国语 2011级 李四 女 112 91 97 300 100.00 不及格 28
201301011003 外国语 2013级 王五 男 101 95 89 285 95.00 不及格 31
201201011004 外国语 2012级 小六子 男 78 99 78 255 85.00 不及格 35
201201011005 计算机学院 2012级 王大麻子 男 79 103 111 293 97.67 不及格 30
201201011006 经管学院 2012级 小白 女 110 99 115 324 108.00 及格 19
201201011007 经管学院 2012级 小青 女 123 111 109 343 114.33 及格 10
201101011008 经管学院 2011级 法海 男 46 115 123 284 94.67 不及格 32
201101011009 经管学院 2011级 小红 女 97 119 113 329 109.67 及格 15
201101011010 计算机学院 2011级 周宁 男 125 92 131 348 116.00 及格 9
201301011011 计算机学院 2013级 李振 男 101 127 89 317 105.67 不及格 24
201201011012 外国语 2012级 王宏恩 女 63 78 139 280 93.33 不及格 33
201201011013 外国语 2012级 张杰 男 105 135 98 338 112.67 及格 13
201201011014 经管学院 2012级 谢娜 女 87 139 97 323 107.67 及格 20
201201011015 经管学院 2012级 王保保 男 109 130 112 351 117.00 及格 8
201301011016 外国语 2013级 王守仁 男 111 127 117 355 118.33 及格 7
201301011017 经管学院 2013级 徐达 男 130 124 122 376 125.33 及格 1
201301011018 经管学院 2013级 徐亮 男 121 121 127 369 123.00 及格 2
201301011019 经管学院 2013级 常小春 女 76 118 113 307 102.33 不及格 27
_ 经管学院 2013级 黄小云 女 _ _ _ _ _ 及格 _`.trim().split('\n');

let html = '<colgroup>' + cols.map(c => `<col class="c-${c}">`).join('') + '</colgroup>';
html += '<thead><tr><th class="corner"></th>' + letters.map(l => `<th scope="col">${l}</th>`).join('') + '</tr></thead><tbody>';
data.forEach((line, r) => {
  const cells = line.split(' ');
  const rowClass = r === 0 ? 'head' : r === 19 ? 'last' : r === 20 ? 'after' : '';
  html += `<tr class="${rowClass}"><th scope="row">${r < 20 ? r + 1 : ''}</th>`;
  letters.forEach((l, c) => {
    const v = cells[c] && cells[c] !== '_' ? cells[c] : '';
    const cls = [];
    if (/[^\d.]/.test(v)) cls.push('t');
    if (r === 0 && c < 12) cls.push('dark');
    if (r > 0 && c === 0) cls.push('id');
    html += `<td class="${cls.join(' ')}">${v}</td>`;
  });
  html += '</tr>';
});
document.getElementById('grid').innerHTML = html + '</tbody>';
```
